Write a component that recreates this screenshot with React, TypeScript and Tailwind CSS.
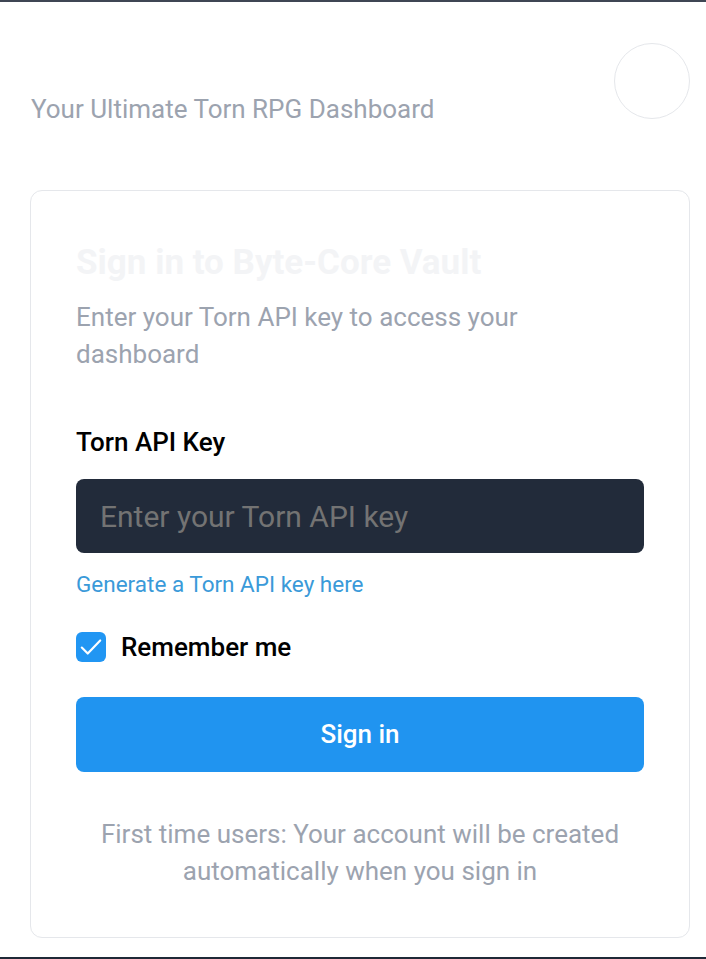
import { useState } from "react"

export default function App() {
  const [remember, setRemember] = useState(true)

  return (
    <div
      className="flex min-h-[959px] w-full flex-col bg-white"
      style={{ fontFamily: "Roboto, 'Noto Sans', sans-serif" }}
    >
      <div className="h-[2px] w-full bg-[#3f4654]" />
      <header className="flex items-start justify-between pl-[31px] pr-[16px] pt-[41px]">
        <p className="mt-[50px] text-[26px] leading-[32px] text-[#9ca3af]">
          Your Ultimate Torn RPG Dashboard
        </p>
        <div className="h-[76px] w-[76px] rounded-full border border-[#e5e7eb]" />
      </header>
      <main className="pl-[30px] pr-[16px] pt-[65px]">
        <div className="rounded-[12px] border border-[#e5e7eb] px-[45px] pb-[47px] pt-[50px]">
          <h1 className="text-[35px] font-bold leading-[44px] text-[#f3f4f6]">
            Sign in to Byte-Core Vault
          </h1>
          <p className="mt-[14px] text-[26px] leading-[37px] text-[#9ca3af]">
            Enter your Torn API key to access your dashboard
          </p>
          <label className="mt-[53px] block text-[26px] font-medium leading-[32px] text-black">
            Torn API Key
          </label>
          <input
            className="mt-[21px] h-[74px] w-full rounded-[8px] bg-[#222b3a] px-[24px] text-[30px] text-white placeholder:text-[#737373] outline-none"
            placeholder="Enter your Torn API key"
          />
          <a className="mt-[16px] block text-[22.5px] leading-[30px] text-[#3a9ad9]" href="#">
            Generate a Torn API key here
          </a>
          <label className="mt-[32px] flex items-center gap-[15px]">
            <button
              type="button"
              onClick={() => setRemember(!remember)}
              className="flex h-[30px] w-[30px] items-center justify-center rounded-[6px] bg-[#2196f3]"
            >
              {remember && (
                <svg width="26" height="26" viewBox="0 0 24 24" fill="none" stroke="white" strokeWidth="2" strokeLinecap="round" strokeLinejoin="round">
                  <path d="M3.5 12.5l5.5 5.5L20.5 6" />
                </svg>
              )}
            </button>
            <span className="text-[26px] font-medium leading-[32px] text-black">Remember me</span>
          </label>
          <button
            type="button"
            className="mt-[34px] h-[75px] w-full rounded-[8px] bg-[#2094f0] text-[26px] font-medium text-white"
          >
            Sign in
          </button>
          <p className="mt-[44px] text-center text-[26px] leading-[37px] text-[#9ca3af]">
            First time users: Your account will be created automatically when you sign in
          </p>
        </div>
      </main>
      <div className="mt-auto h-[2px] w-full bg-[#1f2937]" />
    </div>
  )
}
